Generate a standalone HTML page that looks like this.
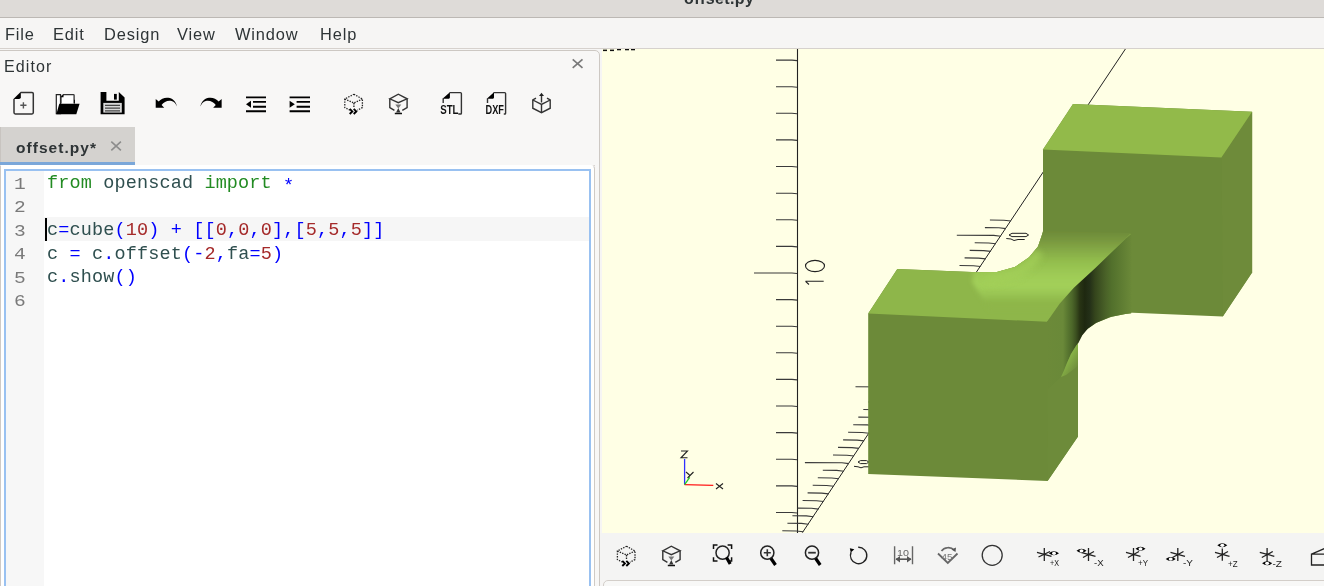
<!DOCTYPE html>
<html><head><meta charset="utf-8">
<style>
*{margin:0;padding:0;box-sizing:border-box}
html,body{width:1324px;height:586px;overflow:hidden;background:#f6f5f4;font-family:"Liberation Sans",sans-serif;position:relative}
.a{position:absolute}
body>div,body>svg{will-change:transform}
#title{left:0;top:0;width:1324px;height:18px;background:#dedbd8;border-bottom:1px solid #bcb8b4}
#title span{position:absolute;left:684px;top:-10px;font-weight:bold;font-size:16px;color:#2e3436;letter-spacing:0.4px}
#menu{left:0;top:18px;width:1324px;height:30px;background:#f6f5f4}
#menu span{position:absolute;top:7px;font-size:16.4px;color:#2e3436;letter-spacing:0.85px}
#sep1{left:0;top:48px;width:1324px;height:1px;background:#d6d1cd}
#sep2{left:0;top:49px;width:600px;height:1px;background:#cfcac5}
#dock{left:-2px;top:50px;width:602px;height:540px;background:#f8f7f6;border:1px solid #cdc8c3;border-top-right-radius:5px}
#edlbl{left:4px;top:58px;font-size:16px;color:#2e3436;letter-spacing:1.1px}
#edclose{left:570px;top:53px;font-size:19px;color:#7d7d7d}
#tabbar{left:135px;top:165px;width:460px;height:1px;background:#d8d4d0}
#tab{left:0;top:127px;width:135px;height:35px;background:#d4d2cf}
#tabline{left:0;top:162px;width:135px;height:4px;background:#7ba7d9}
#tabtxt{left:16px;top:139px;font-size:15.5px;font-weight:bold;color:#2e3436;letter-spacing:1.05px}
#tabx{left:109px;top:136px;font-size:18px;color:#8c8c8c}
#frame{left:0;top:165px;width:595px;height:430px;border:1px solid #cfcac5;border-top-color:transparent;border-radius:0 4px 0 0;background:#fff}
#focus{left:4px;top:169px;width:587px;height:430px;border:2px solid #99c1f1;background:#fff}
#gutter{left:6px;top:171px;width:38px;height:420px;background:#f7f7f7}
#hl{left:44px;top:217px;width:545px;height:24px;background:#f6f6f6}
#caret{left:45px;top:218px;width:2px;height:23px;background:#000}
.ln{position:absolute;left:13.5px;font-family:"Liberation Mono",monospace;font-size:17px;color:#7a7a7a;transform:scaleX(1.15);transform-origin:0 0}
.code{position:absolute;left:47px;font-family:"Liberation Mono",monospace;font-size:18.5px;letter-spacing:0.14px;color:#2f4f4f;white-space:pre}
.kw{color:#228b22}.op{color:#0000ff}.nm{color:#a52a2a}.st{position:relative;top:3px}
#viewer{left:602px;top:49px;width:722px;height:484px;background:#ffffe5;overflow:hidden}
#vtb{left:600px;top:533px;width:724px;height:47px;background:#f4f4f3}
#bot{left:603px;top:580px;width:730px;height:20px;background:#f8f8f7;border:1px solid #d3cec9;border-radius:5px 0 0 0}
</style></head><body>
<div id="title" class="a"><span>offset.py</span></div>
<div id="menu" class="a">
<span style="left:5px">File</span><span style="left:53px">Edit</span><span style="left:104px">Design</span><span style="left:177px">View</span><span style="left:235px">Window</span><span style="left:320px">Help</span>
</div>
<div id="sep1" class="a"></div>
<div id="dock" class="a"></div>
<div id="edlbl" class="a">Editor</div>

<div id="tabbar" class="a"></div>
<div id="tab" class="a"></div>
<div class="a" style="left:0;top:127px;width:1px;height:460px;background:#c8c4c0"></div>
<div id="tabline" class="a"></div>
<div id="tabtxt" class="a">offset.py*</div>

<div id="frame" class="a"></div>
<div id="focus" class="a"></div>
<div id="gutter" class="a"></div>
<div id="hl" class="a"></div>
<div class="ln" style="top:175px">1</div>
<div class="ln" style="top:198px">2</div>
<div class="ln" style="top:222px">3</div>
<div class="ln" style="top:245px">4</div>
<div class="ln" style="top:269px">5</div>
<div class="ln" style="top:292px">6</div>
<div class="code" style="top:173px"><span class="kw">from</span> openscad <span class="kw">import</span> <span class="op st">*</span></div>
<div class="code" style="top:220px">c<span class="op">=</span>cube<span class="op">(</span><span class="nm">10</span><span class="op">)</span> <span class="op">+</span> <span class="op">[[</span><span class="nm">0</span><span class="op">,</span><span class="nm">0</span><span class="op">,</span><span class="nm">0</span><span class="op">],[</span><span class="nm">5</span><span class="op">,</span><span class="nm">5</span><span class="op">,</span><span class="nm">5</span><span class="op">]]</span></div>
<div class="code" style="top:244px">c <span class="op">=</span> c<span class="op">.</span>offset<span class="op">(-</span><span class="nm">2</span><span class="op">,</span>fa<span class="op">=</span><span class="nm">5</span><span class="op">)</span></div>
<div class="code" style="top:267px">c<span class="op">.</span>show<span class="op">()</span></div>
<div id="caret" class="a"></div>
<div id="vtb" class="a"></div>
<div id="bot" class="a"></div>
<svg class="a" style="left:0;top:0" width="1324" height="586" viewBox="0 0 1324 586"><defs><clipPath id="vc"><rect x="602" y="49" width="722" height="484"/></clipPath></defs><g clip-path="url(#vc)"><rect x="602" y="49" width="722" height="484" fill="#ffffe5"/>
<path d="M797.5 49V533" stroke="#222" stroke-width="1.1" fill="none"/>
<path d="M776 60.1L792 60.1L797 60.6M776 86.7L792 86.7L797 87.2M776 113.3L792 113.3L797 113.8M776 139.9L792 139.9L797 140.4M776 166.5L792 166.5L797 167.0M776 193.2L792 193.2L797 193.7M776 219.8L792 219.8L797 220.3M776 246.4L792 246.4L797 246.9M754 273.0L792 273.0L797 273.5M776 299.6L792 299.6L797 300.1M776 326.2L792 326.2L797 326.7M776 352.8L792 352.8L797 353.3M776 379.4L792 379.4L797 379.9M776 406.0L792 406.0L797 406.5M776 432.6L792 432.6L797 433.1M776 459.2L792 459.2L797 459.8M776 485.9L792 485.9L797 486.4M776 512.5L792 512.5L797 513.0" stroke="#3a3a3a" stroke-width="1.1" fill="none"/>
<path d="M802.4 532.6L1125.4 49" stroke="#222" stroke-width="1" fill="none"/>
<path d="M782.3 530.8L796.3 531.0L803.3 531.8M787.4 523.2L801.4 523.4L808.4 524.2M792.4 515.7L806.4 515.9L813.4 516.7M797.5 508.1L811.5 508.3L818.5 509.1M802.6 500.5L816.6 500.7L823.6 501.5M807.6 492.9L821.6 493.1L828.6 493.9M812.7 485.3L826.7 485.5L833.7 486.3M817.8 477.8L831.8 478.0L838.8 478.8M822.8 470.2L836.8 470.4L843.8 471.2M804.9 462.6L841.9 462.8L848.9 463.6M833.0 455.0L847.0 455.2L854.0 456.0M838.0 447.4L852.0 447.6L859.0 448.4M843.1 439.9L857.1 440.1L864.1 440.9M848.1 432.3L862.1 432.5L869.1 433.3M853.2 424.7L867.2 424.9L874.2 425.7M858.3 417.1L872.3 417.3L879.3 418.1M863.3 409.5L877.3 409.7L884.3 410.5M868.4 402.0L882.4 402.2L889.4 403.0M873.5 394.4L887.5 394.6L894.5 395.4M855.5 386.8L892.5 387.0L899.5 387.8M883.6 379.2L897.6 379.4L904.6 380.2M888.7 371.6L902.7 371.8L909.7 372.6M893.7 364.1L907.7 364.3L914.7 365.1M898.8 356.5L912.8 356.7L919.8 357.5M903.8 348.9L917.8 349.1L924.8 349.9M908.9 341.3L922.9 341.5L929.9 342.3M914.0 333.7L928.0 333.9L935.0 334.7M919.0 326.2L933.0 326.4L940.0 327.2M924.1 318.6L938.1 318.8L945.1 319.6M906.2 311.0L943.2 311.2L950.2 312.0M934.2 303.4L948.2 303.6L955.2 304.4M939.3 295.8L953.3 296.0L960.3 296.8M944.4 288.3L958.4 288.5L965.4 289.3M949.4 280.7L963.4 280.9L970.4 281.7M954.5 273.1L968.5 273.3L975.5 274.1M959.5 265.5L973.5 265.7L980.5 266.5M964.6 257.9L978.6 258.1L985.6 258.9M969.7 250.4L983.7 250.6L990.7 251.4M974.7 242.8L988.7 243.0L995.7 243.8M956.8 235.2L993.8 235.4L1000.8 236.2M984.9 227.6L998.9 227.8L1005.9 228.6M989.9 220.0L1003.9 220.2L1010.9 221.0" stroke="#3a3a3a" stroke-width="1.1" fill="none"/>
<g stroke="#222" stroke-width="1.1" fill="none"><ellipse cx="815" cy="266" rx="9.5" ry="5.6"/><path d="M805.5 281.3H823.7M805.5 281.3L809 284.5"/></g>
<g stroke="#222" stroke-width="1" fill="none"><path d="M1009 235L1012 233.3H1026L1028.6 235L1026 236.6H1012Z"/><path d="M1006.3 238.5L1011 239L1014 240.5L1018 239.5H1024.7"/></g>
<g stroke="#222" stroke-width="1" fill="none"><path d="M858 462L860.5 460.6H866.5L869 462L866.5 463.6H860.5Z"/><path d="M854 466.3L858 466.8L861 467.8L864 466.8H869"/></g>
<defs>
<linearGradient id="gFil" gradientUnits="userSpaceOnUse" x1="0" y1="231" x2="0" y2="302">
<stop offset="0" stop-color="#6d8a38"/>
<stop offset="0.15" stop-color="#7a9a40"/>
<stop offset="0.44" stop-color="#94bf4e"/>
<stop offset="0.65" stop-color="#a0cd57"/>
<stop offset="0.78" stop-color="#a3d05a"/>
<stop offset="0.9" stop-color="#98c452"/>
<stop offset="1" stop-color="#8eb64a"/>
</linearGradient>
<linearGradient id="gBand" gradientUnits="userSpaceOnUse" x1="1047" y1="0" x2="1131" y2="0">
<stop offset="0" stop-color="#6c8a39"/>
<stop offset="0.19" stop-color="#6a8939"/>
<stop offset="0.25" stop-color="#587630"/>
<stop offset="0.30" stop-color="#4c6629"/>
<stop offset="0.345" stop-color="#3c5020"/>
<stop offset="0.39" stop-color="#283414"/>
<stop offset="0.45" stop-color="#1e2810"/>
<stop offset="0.51" stop-color="#243018"/>
<stop offset="0.57" stop-color="#34441c"/>
<stop offset="0.63" stop-color="#3e5222"/>
<stop offset="0.70" stop-color="#4a6228"/>
<stop offset="0.77" stop-color="#52702c"/>
<stop offset="0.845" stop-color="#5a7830"/>
<stop offset="0.92" stop-color="#628034"/>
<stop offset="1" stop-color="#6a8838"/>
</linearGradient>
<linearGradient id="gSliv" gradientUnits="userSpaceOnUse" x1="1066" y1="358" x2="1079" y2="366"><stop offset="0" stop-color="#8dbb49"/><stop offset="0.45" stop-color="#7ea442"/><stop offset="1" stop-color="#6d8b3a"/></linearGradient>
<clipPath id="fclip"><polygon points="940,310 940,272 978,272.2 996.9,272 1014.8,267.1 1029.1,257.3 1038,246.5 1041.7,235.7 1043,231 1131.2,233 1125.9,238.4 1095.4,268 1073.9,287.7 1062,301 1047,322 940,322"/></clipPath>
<filter id="blur2" x="-20%" y="-20%" width="140%" height="140%"><feGaussianBlur stdDeviation="2.2"/></filter>
<filter id="blur3" x="-50%" y="-50%" width="200%" height="200%"><feGaussianBlur stdDeviation="3"/></filter>
</defs>
<g stroke="none">
<polygon fill="#6c8a39" points="1043,149.4 1073,104 1252.1,111.8 1252.1,272.5 1222.8,316.6 1043,309"/>
<polygon fill="#6e8b3a" points="1221.6,157.6 1252.1,111.8 1252.1,272.5 1222.8,316.6"/>
<polygon fill="#92ba4a" points="1073,104 1252.1,111.8 1221.4,157.6 1043,149.4"/>
<polygon fill="#6c8a39" points="868.2,313.4 897.3,269.1 978,272.2 996.9,272 1014.8,267.1 1029.1,257.3 1038,246.5 1041.7,235.7 1043,232 1131,234 1131.2,313.2 1125.3,314.1 1111.7,316.7 1096.3,322.7 1084.4,331.2 1078,341.4 1078,436.6 1047.6,481 868.2,473.9"/>
<polygon fill="#6d8b3a" points="1047,321.8 1078,277 1078,436.6 1047.6,481"/>
<polygon fill="#8eb64a" points="868.2,313.4 897.3,269.1 978,272.2 996.9,272 1014.8,267.1 1029.1,257.3 1038,246.5 1041.7,235.7 1043,232 1131,234 1047,321.8"/>
<g clip-path="url(#fclip)"><polygon fill="url(#gFil)" filter="url(#blur2)" points="990,310 972,282 975,262 996.9,262 1014.8,257 1025,247 1030,236 1034,222 1145,222 1145,310"/></g>
<g clip-path="url(#fclip)"><path d="M985 281L1000 279L1018 273L1031 263L1039 252" fill="none" stroke="#a2cf58" stroke-width="10" opacity="0.8" filter="url(#blur3)"/></g>
<polygon fill="url(#gBand)" points="1047,321.8 1059.6,303.8 1073.9,287.7 1095.4,268 1125.9,238.4 1131.2,234 1131.2,313.2 1125.3,314.1 1110,317 1096,323 1088,328.5 1082.3,335.3 1078.4,343 1076,346 1071,354 1067,363 1063.8,371 1061,377 1047.5,390"/>
<polygon fill="url(#gSliv)" points="1080.5,339.5 1076,346 1071,354 1067,363 1063.8,371 1061,377 1066,375 1078,366 1078,343"/>
</g>

<g fill="#111"><rect x="603" y="49.6" width="4" height="1.5"/><rect x="610" y="49.6" width="4" height="1.5"/><rect x="617" y="49" width="4" height="1.3"/><rect x="625" y="49" width="4" height="1.3"/><rect x="631" y="49" width="4" height="1.3"/></g>
<path d="M684.6 459V484.6" stroke="#3030ff" stroke-width="1.3"/><path d="M684.6 484.6L713.3 485.4" stroke="#ff1a1a" stroke-width="1.3"/><path d="M684.6 484.6L689.7 477.4" stroke="#22cc22" stroke-width="1.3"/>
<g stroke="#222" stroke-width="1.1" fill="none"><path d="M681 451H687.5L681 457.8H687.5"/><path d="M716 483.5L723 489M723 483.5L716 489"/><path d="M686 472L689.5 475M693.5 472L687.5 478"/></g></g><path d="M572.7 59.3L582.5 67.8M582.5 59.3L572.7 67.8" stroke="#7a7a7a" stroke-width="1.7"/>
<path d="M111.3 141.7L120.9 150.3M120.9 141.7L111.3 150.3" stroke="#8c8c8c" stroke-width="1.6"/>
<g id="edtb">
<!-- new file -->
<path d="M20.8 92.5H32a1.3 1.3 0 0 1 1.3 1.3V112.6a1.3 1.3 0 0 1 -1.3 1.3H15.3a1.3 1.3 0 0 1 -1.3 -1.3V99" fill="none" stroke="#333" stroke-width="1.5"/>
<path d="M13.5 99L20.8 91.8V97.2a1.8 1.8 0 0 1 -1.8 1.8Z" fill="#000"/>
<path d="M23.4 102.2V108.4M20.3 105.3H26.5" stroke="#555" stroke-width="1.4"/>
<!-- open folder -->
<path d="M56.3 94.7H60.5V113.6H56.3Z" fill="#fff" stroke="#222" stroke-width="1.2"/>
<path d="M61 103.5V96.9L63.5 94.6H73.4a0.7 0.7 0 0 1 0.7 0.7V103.5" fill="#fff" stroke="#333" stroke-width="1.3"/>
<path d="M60.7 97.3L63.5 94.6V97.3Z" fill="#000"/>
<path d="M74.2 99.8H75V103.5H74.2Z" fill="#000"/>
<path d="M59.3 103.7H79.6L76.3 114.2H56.3Z" fill="#000"/>
<!-- save -->
<path d="M100.6 92.1H106.4V100.8H118.8V92.1L124.6 97.6V114.2H100.6Z" fill="#000"/>
<rect x="114" y="93.9" width="2.8" height="5.7" fill="#000"/>
<rect x="103.3" y="102.9" width="18.5" height="9.7" fill="#d8d8d8"/>
<path d="M105 105.3H120M105 108.1H120M105 110.9H120" stroke="#444" stroke-width="1.2"/>
<!-- undo -->
<path d="M155.7 99V107.7H164.2L161.6 105C163.8 101.6 167.8 100 171.6 100.9C174.2 101.6 176.1 103.9 176.9 106.6C176.4 102.8 173.8 99.2 169.8 98.1C165.6 97 161.3 98.4 158.7 101.6Z" fill="#000"/>
<!-- redo -->
<path d="M155.7 99V107.7H164.2L161.6 105C163.8 101.6 167.8 100 171.6 100.9C174.2 101.6 176.1 103.9 176.9 106.6C176.4 102.8 173.8 99.2 169.8 98.1C165.6 97 161.3 98.4 158.7 101.6Z" fill="#000" transform="translate(377.35 0) scale(-1 1)"/>
<!-- unindent -->
<path d="M246 97.4H266M253 101.9H266M253 106.7H266M246 111.2H266" stroke="#000" stroke-width="1.9"/>
<path d="M246 104.3L251 100.8V107.8Z" fill="#000"/>
<!-- indent -->
<path d="M289.6 97.4H310M296.6 101.9H310M296.6 106.7H310M289.6 111.2H310" stroke="#000" stroke-width="1.9"/>
<path d="M294.8 104.3L289.6 100.8V107.8Z" fill="#000"/>
<!-- preview cube dashed -->
<g fill="none" stroke="#222" stroke-width="1.3" stroke-dasharray="1.4 1.2">
<path d="M353.9 94.2L362.4 99.0V107.5L357.4 110.2M349.9 110.2L344.79999999999995 107.5V99.0L353.9 94.2"/>
<path d="M344.79999999999995 99.0L353.9 103.0L362.4 99.0M353.9 103.0V108.2"/>
</g>
<path d="M349.7 108.8L352.29999999999995 111.4L349.7 114.0M353.7 108.8L356.29999999999995 111.4L353.7 114.0" fill="none" stroke="#000" stroke-width="1.9"/>
<!-- render cube -->
<g fill="none" stroke="#333" stroke-width="1.4">
<path d="M389.8 98.8L398.3 94.2L407.1 98.8L398.3 102.7Z"/>
<path d="M389.8 98.8V107.5L394.40000000000003 110.4M407.1 98.8V107.5L402.3 110.4"/>
</g>
<path d="M395.3 104.5H401.3L398.3 108.5Z" fill="#777"/>
<path d="M398.3 108.0L400.5 112.4H396.1Z" fill="#333"/>
<path d="M394.8 113.5H402.0" stroke="#111" stroke-width="1.5"/>
<!-- STL -->
<path d="M443.2 98.5V103M449.6 92.6H460.4a1 1 0 0 1 1 1V113.2a0.8 0.8 0 0 1 -0.8 0.8H458.3" fill="none" stroke="#333" stroke-width="1.4"/>
<path d="M442.5 98.8L449.9 92.2V96.5a2 2 0 0 1 -2 2.3Z" fill="#000"/>
<text x="440.2" y="114.1" font-family="Liberation Sans" font-weight="bold" font-size="12.3" fill="#111" textLength="18.3" lengthAdjust="spacingAndGlyphs">STL</text>
<!-- DXF -->
<path d="M487.5 98.5V103M493.6 92.6H504.6a1 1 0 0 1 1 1V113.2a0.8 0.8 0 0 1 -0.8 0.8H503.8" fill="none" stroke="#333" stroke-width="1.4"/>
<path d="M486.8 98.8L494 92.2V96.5a2 2 0 0 1 -2 2.3Z" fill="#000"/>
<text x="485.5" y="114.1" font-family="Liberation Sans" font-weight="bold" font-size="12.3" fill="#111" textLength="18.4" lengthAdjust="spacingAndGlyphs">DXF</text>
<!-- export cube -->
<g fill="none" stroke="#333" stroke-width="1.4">
<path d="M536 98.2L532.8 100V108.2L541.5 112.6L550.2 108.2V100L547 98.2"/>
<path d="M532.8 100L541.5 104.4L550.2 100M541.5 104.4V112.6"/>
<path d="M541.5 102.5V95.5"/>
</g>
<path d="M539 96L541.5 92.8L544 96Z" fill="#222"/>
</g>
<g id="vtb">
<!-- preview dashed cube -->
<g fill="none" stroke="#222" stroke-width="1.3" stroke-dasharray="1.4 1.2">
<path d="M626.5 546.2L635.0 551.0V559.5L630.0 562.2M622.5 562.2L617.4 559.5V551.0L626.5 546.2"/>
<path d="M617.4 551.0L626.5 555.0L635.0 551.0M626.5 555.0V560.2"/>
</g>
<path d="M622.3 560.8000000000001L624.9 563.4000000000001L622.3 566.0M626.3 560.8000000000001L628.9 563.4000000000001L626.3 566.0" fill="none" stroke="#000" stroke-width="1.9"/>
<!-- render cube -->
<g fill="none" stroke="#333" stroke-width="1.4">
<path d="M662.8 550.8000000000001L671.3 546.2L680.0999999999999 550.8000000000001L671.3 554.7Z"/>
<path d="M662.8 550.8000000000001V559.5L667.4 562.4000000000001M680.0999999999999 550.8000000000001V559.5L675.3 562.4000000000001"/>
</g>
<path d="M668.3 556.5H674.3L671.3 560.5Z" fill="#777"/>
<path d="M671.3 560.0L673.5 564.4000000000001H669.0999999999999Z" fill="#333"/>
<path d="M667.8 565.5H675.0" stroke="#111" stroke-width="1.5"/>
<!-- view all -->
<path d="M713.5 549V545.1H717.5M731.6 549V545.1H727.6M713.5 557.2V561H717.5M731.6 557.2V561H727.6" fill="none" stroke="#111" stroke-width="1.5"/>
<circle cx="722.6" cy="552.7" r="6.6" fill="none" stroke="#222" stroke-width="1.5"/>
<path d="M726.5 557.5L730.2 564" stroke="#000" stroke-width="3.2"/>
<!-- zoom in -->
<circle cx="767.3" cy="552.7" r="6.6" fill="none" stroke="#222" stroke-width="1.5"/>
<path d="M767.3 549.2V556.2M763.8 552.7H770.8" stroke="#333" stroke-width="1.6"/>
<path d="M771 558.5L775.5 565" stroke="#000" stroke-width="3.2"/>
<!-- zoom out -->
<circle cx="812" cy="552.7" r="6.6" fill="none" stroke="#222" stroke-width="1.5"/>
<path d="M808.2 552.7H815.8" stroke="#333" stroke-width="1.8"/>
<path d="M815.7 558.5L820.2 565" stroke="#000" stroke-width="3.2"/>
<!-- reset view -->
<path d="M851.8 550.8A8.2 8.2 0 1 0 859.6 547.3" fill="none" stroke="#222" stroke-width="1.4" transform="rotate(-10 859 555.3)"/>
<path d="M849.8 548.2L854.3 549.3L850.8 552.5Z" fill="#000"/>
<!-- scale -->
<path d="M894.6 546.3V564.3M912.5 546.3V564.3" stroke="#666" stroke-width="1.4"/>
<path d="M896 559.2H911" stroke="#555" stroke-width="1.6"/>
<path d="M895.5 559.2L900 556V562.4Z M911.5 559.2L907 556V562.4Z" fill="#555"/>
<text x="897" y="555.8" font-family="Liberation Sans" font-size="9.5" fill="#666" textLength="12" lengthAdjust="spacingAndGlyphs">10</text>
<!-- 45 -->
<path d="M938 553.5L947.8 563L957.5 553.5" fill="none" stroke="#666" stroke-width="1.8"/>
<path d="M941.5 551C944 547 951 546.5 954 550" fill="none" stroke="#666" stroke-width="1.6"/>
<path d="M951.5 549.5L956 547.5L955.5 552Z" fill="#555"/>
<text x="941.5" y="559.5" font-family="Liberation Sans" font-size="9" fill="#777" textLength="11" lengthAdjust="spacingAndGlyphs">45</text>
<!-- circle -->
<circle cx="992.2" cy="555.3" r="10" fill="none" stroke="#333" stroke-width="1.3"/>
</g>
<g id="views" stroke="#222" fill="none" stroke-width="1.3">
<!-- +X -->
<path d="M1044.3 548V561M1037 552.3L1051.5 556.3M1038.5 557L1050 551.5"/>
<path d="M1048.8 553.3Q1053.9 549.3 1059 553.3Q1053.9 557.3 1048.8 553.3Z" fill="#000" stroke="none"/>
<ellipse cx="1054" cy="553.3" rx="2" ry="1.6" fill="#fff" stroke="none"/>
<text x="1050" y="566" font-family="Liberation Sans" font-size="8.5" fill="#222" stroke="none" textLength="9" lengthAdjust="spacingAndGlyphs">+X</text>
<!-- -X -->
<path d="M1088.5 548V561M1081 552.3L1095.5 556.3M1083 557.5L1094 551.5"/>
<path d="M1076.5 550.8Q1081.5 546.8 1086.5 550.8Q1081.5 554.8 1076.5 550.8Z" fill="#000" stroke="none"/>
<ellipse cx="1081.5" cy="550.8" rx="2" ry="1.6" fill="#fff" stroke="none"/>
<text x="1094" y="566" font-family="Liberation Sans" font-size="8.5" fill="#222" stroke="none" textLength="9.6" lengthAdjust="spacingAndGlyphs">-X</text>
<!-- +Y -->
<path d="M1133.5 548V561M1126 552.3L1140.5 556.3M1128 557.5L1139 551.5"/>
<path d="M1135.5 548.8Q1140.5 544.8 1145.5 548.8Q1140.5 552.8 1135.5 548.8Z" fill="#000" stroke="none"/>
<ellipse cx="1140.5" cy="548.8" rx="2" ry="1.6" fill="#fff" stroke="none"/>
<text x="1138" y="566" font-family="Liberation Sans" font-size="8.5" fill="#222" stroke="none" textLength="10" lengthAdjust="spacingAndGlyphs">+Y</text>
<!-- -Y -->
<path d="M1177.8 548V561M1170.5 552.3L1185 556.3M1172.5 557.5L1183.5 551.5"/>
<path d="M1165.7 559.1Q1170.7 555.1 1175.7 559.1Q1170.7 563.1 1165.7 559.1Z" fill="#000" stroke="none"/>
<ellipse cx="1170.7" cy="559.1" rx="2" ry="1.6" fill="#fff" stroke="none"/>
<text x="1183" y="566" font-family="Liberation Sans" font-size="8.5" fill="#222" stroke="none" textLength="10" lengthAdjust="spacingAndGlyphs">-Y</text>
<!-- +Z -->
<path d="M1222.3 548.5V560.8M1215 552.3L1229.5 556.3M1217 557.5L1228 551.5"/>
<path d="M1217.3 545.3Q1222.3 541.3 1227.3 545.3Q1222.3 549.3 1217.3 545.3Z" fill="#000" stroke="none"/>
<ellipse cx="1222.3" cy="545.3" rx="2" ry="1.6" fill="#fff" stroke="none"/>
<text x="1228" y="566.5" font-family="Liberation Sans" font-size="9" fill="#222" stroke="none" textLength="9.5" lengthAdjust="spacingAndGlyphs">+Z</text>
<!-- -Z -->
<path d="M1267.1 548V563M1259.8 552.3L1274.3 556.3M1261.8 557.5L1272.8 551.5"/>
<path d="M1262.1 563.3Q1267.1 559.3 1272.1 563.3Q1267.1 567.3 1262.1 563.3Z" fill="#000" stroke="none"/>
<ellipse cx="1267.1" cy="563.3" rx="2" ry="1.6" fill="#fff" stroke="none"/>
<text x="1272.5" y="566.5" font-family="Liberation Sans" font-size="9" fill="#222" stroke="none" textLength="9.5" lengthAdjust="spacingAndGlyphs">-Z</text>
<!-- cube -->
<path d="M1311.5 554.2H1326V565H1311.5Z M1311.5 554.2L1326 547.8"/>
</g>
</svg>
</body></html>
